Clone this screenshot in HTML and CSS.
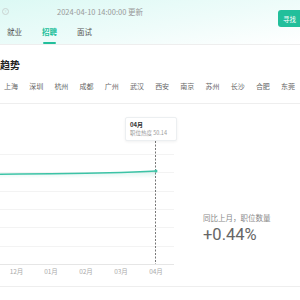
FILE: index.html
```html
<!DOCTYPE html>
<html lang="zh-CN">
<head>
  <meta charset="UTF-8">
  <meta name="viewport" content="width=device-width, initial-scale=1.0">
  <title>招聘趋势</title>
  <link rel="stylesheet" href="styles.css">
</head>
<body>

  <!-- Kopfbereich mit Tabs -->
  <header class="top">
    <div class="top-left">
      <div class="meta">
        <span class="help-icon">?</span>
        <span class="updated">2024-04-10 14:00:00 更新</span>
      </div>
      <nav class="tabs">
        <a class="tab">就业</a>
        <a class="tab active">招聘</a>
        <a class="tab">面试</a>
      </nav>
    </div>
    <button class="find-btn">寻找</button>
  </header>

  <section class="trend">
    <h2 class="trend-title">趋势</h2>
    <ul class="cities">
      <li>上海</li><li>深圳</li><li>杭州</li><li>成都</li><li>广州</li><li>武汉</li>
      <li>西安</li><li>南京</li><li>苏州</li><li>长沙</li><li>合肥</li><li>东莞</li>
    </ul>
  </section>

  <section class="chart-row">
    <div class="chart">
      <svg width="180" height="182" viewBox="0 0 180 182">
        <defs>
          <linearGradient id="area" x1="0" y1="0" x2="0" y2="1">
            <stop offset="0" stop-color="#3cc3a6" stop-opacity="0.18"/>
            <stop offset="0.08" stop-color="#3cc3a6" stop-opacity="0"/>
          </linearGradient>
        </defs>
        <g stroke="#f3f3f3" stroke-width="1">
          <line x1="0" y1="50.5" x2="174" y2="50.5"/>
          <line x1="0" y1="68.5" x2="174" y2="68.5"/>
          <line x1="0" y1="87.5" x2="174" y2="87.5"/>
          <line x1="0" y1="105.5" x2="174" y2="105.5"/>
          <line x1="0" y1="123.5" x2="174" y2="123.5"/>
          <line x1="0" y1="142.5" x2="174" y2="142.5"/>
        </g>
        <line x1="0" y1="160.5" x2="174" y2="160.5" stroke="#e6e6e6"/>
        <path d="M-19 70.5 C0 70.3 30 70 51 69.7 S100 69 121 68.4 S145 67.4 156 67 L156 160 L-19 160 Z" fill="url(#area)"/>
        <path d="M-19 70.5 C0 70.3 30 70 51 69.7 S100 69 121 68.4 S145 67.4 156 67" fill="none" stroke="#3cc3a6" stroke-width="1.5"/>
        <line x1="155.5" y1="37" x2="155.5" y2="160" stroke="#777" stroke-width="1" stroke-dasharray="2 1.5"/>
        <circle cx="156" cy="67" r="1.5" fill="#3cc3a6"/>
        <g class="axis-label" font-size="6.5" fill="#aaa" text-anchor="middle">
          <text x="16.5" y="170">12月</text>
          <text x="51" y="170">01月</text>
          <text x="86" y="170">02月</text>
          <text x="121" y="170">03月</text>
          <text x="156" y="170">04月</text>
        </g>
      </svg>
      <div class="tooltip">
        <div class="tip-title">04月</div>
        <div class="tip-value">职位热度 50.14</div>
      </div>
    </div>
    <div class="stat">
      <div class="stat-label">同比上月，职位数量</div>
      <div class="stat-value">+0.44%</div>
    </div>
  </section>

</body>
</html>
```

FILE: styles.css
```css
:root {
  --green: #22bf9b;
  --dark: #333;
  --grey: #999;
  --line: #eeeeee;
}
*, *::before, *::after { box-sizing: border-box; margin: 0; padding: 0; }
body {
  width: 300px; height: 300px; overflow: hidden;
  background: #fff;
  font-family: "Noto Sans CJK SC", "Noto Sans", sans-serif;
  color: var(--dark);
}

/* Kopf */
.top {
  display: flex; justify-content: space-between;
  height: 45px;
  border-bottom: 1px solid var(--line);
  background: linear-gradient(170deg, #dcf9f4 0%, #eefcfa 55%, #ffffff 100%);
}
.meta {
  display: flex; align-items: center;
  height: 22px; padding-left: 2px;
}
.help-icon {
  width: 7px; height: 7px;
  border: 1px solid #c9d3d1; border-radius: 50%;
  font-size: 4px; line-height: 5px; text-align: center; color: #c9d3d1;
}
.updated {
  margin-left: 48px;
  font-size: 7.5px; color: var(--grey);
  white-space: nowrap;
}
.tabs { display: flex; gap: 20px; padding-left: 7px; }
.tab {
  position: relative;
  height: 22px; line-height: 20px;
  font-size: 7.5px; color: #555;
}
.tab.active { color: var(--green); font-weight: 700; }
.tab.active::after {
  content: ""; position: absolute;
  left: 1px; right: 1px; bottom: 0;
  height: 2px; border-radius: 1px;
  background: var(--green);
}
.find-btn {
  align-self: flex-start;
  margin-top: 10px; margin-right: -2px;
  width: 24px; height: 17px;
  border: none; border-radius: 3px 0 0 3px;
  background: var(--green); color: #fff;
  font-family: inherit; font-size: 6.5px;
  text-align: left; padding-left: 5px;
}

/* Trend */
.trend {
  padding-top: 13px; padding-bottom: 12px;
  border-bottom: 1px solid var(--line);
}
.trend-title {
  font-size: 10px; line-height: 13px; font-weight: 700;
  color: #222;
}
.cities {
  list-style: none;
  display: flex; gap: 11.2px;
  margin-top: 10px; padding-left: 4px;
  font-size: 7px; line-height: 10px; color: #666;
  white-space: nowrap;
}

/* Diagramm */
.chart-row {
  display: flex;
  height: 183px;
  border-bottom: 1px solid var(--line);
}
.chart { position: relative; width: 180px; flex: none; }
.chart svg { display: block; }
.axis-label { font-family: "Noto Sans CJK SC", sans-serif; }
.tooltip {
  position: absolute; left: 125px; top: 13px;
  width: 52px; height: 24px;
  padding: 3px 4px;
  background: #fff;
  border: 1px solid #eceff1; border-radius: 2px;
  box-shadow: 0 1px 3px rgba(0,0,0,0.06);
  white-space: nowrap;
}
.tip-title { font-size: 6px; line-height: 8px; font-weight: 700; color: #333; }
.tip-value { font-size: 5.5px; line-height: 8px; color: #999; }

.stat { margin-left: 23px; padding-top: 109px; }
.stat-label { font-size: 7.5px; line-height: 10px; color: #888; }
.stat-value {
  margin-top: 2px;
  font-family: Roboto, "Liberation Sans", sans-serif;
  font-size: 16.5px; line-height: 20px; color: #666;
}
```
